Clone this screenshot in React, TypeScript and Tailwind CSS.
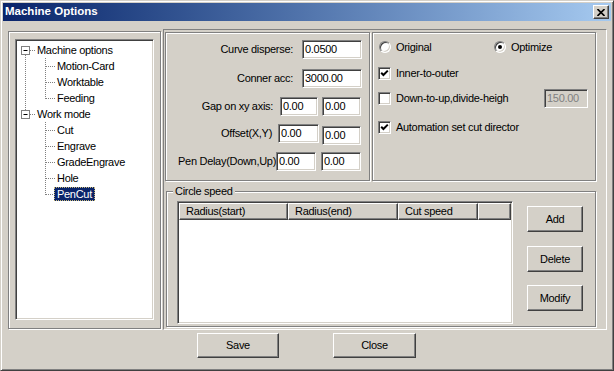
import React from "react";

const raised =
  "border border-t-white border-l-white border-r-[#404040] border-b-[#404040] shadow-[inset_-1px_-1px_0_#808080]";
const sunken =
  "border border-t-[#808080] border-l-[#808080] border-r-white border-b-white shadow-[inset_1px_1px_0_#404040,inset_-1px_-1px_0_#d4d0c8]";
const etched = "border border-[#808080] shadow-[inset_1px_1px_0_#fff,1px_1px_0_#fff]";

const tree = [
  { label: "Machine options", root: true },
  { label: "Motion-Card" },
  { label: "Worktable" },
  { label: "Feeding" },
  { label: "Work mode", root: true },
  { label: "Cut" },
  { label: "Engrave" },
  { label: "GradeEngrave" },
  { label: "Hole" },
  { label: "PenCut", selected: true },
];

const Field = ({ value, className = "", disabled = false }: { value: string; className?: string; disabled?: boolean }) => (
  <div
    className={`h-[19px] ${sunken} ${disabled ? "bg-[#d4d0c8] text-[#808080]" : "bg-white text-black"} flex items-center pl-[2px] ${className}`}
  >
    {value}
  </div>
);

const Check = ({ checked }: { checked: boolean }) => (
  <div className={`w-[13px] h-[13px] shrink-0 bg-white ${sunken} flex items-center justify-center`}>
    {checked && (
      <svg width="9" height="9" viewBox="0 0 9 9">
        <path d="M1.2 3.8 L3.4 6 L7.8 1.6" stroke="#000" strokeWidth="2" fill="none" />
      </svg>
    )}
  </div>
);

const Radio = ({ checked }: { checked: boolean }) => (
  <div className="w-[13px] h-[13px] shrink-0 flex items-center justify-center">
    <div className="w-[12px] h-[12px] rounded-full bg-white border border-t-[#808080] border-l-[#808080] border-r-white border-b-white shadow-[inset_1px_1px_0_#404040,inset_-1px_-1px_0_#d4d0c8] flex items-center justify-center">
      {checked && <div className="w-[4px] h-[4px] rounded-full bg-black" />}
    </div>
  </div>
);

const Button = ({ label, className = "" }: { label: string; className?: string }) => (
  <div className={`${raised} bg-[#d4d0c8] flex items-center justify-center ${className}`}>{label}</div>
);

export default function App() {
  return (
    <div className="w-[614px] h-[371px] bg-[#d4d0c8] font-['Liberation_Sans',Arial,sans-serif] text-[11px] tracking-[-0.3px] text-black border border-t-[#d4d0c8] border-l-[#d4d0c8] border-r-[#404040] border-b-[#404040] shadow-[inset_1px_1px_0_#fff,inset_-1px_-1px_0_#808080] p-[2px] overflow-hidden select-none">
      {/* title bar */}
      <div className="h-[18px] bg-linear-to-r from-[#0a246a] to-[#a6caf0] flex items-center pl-[2px] pr-[2px]">
        <span className="text-white font-bold text-[11.5px] tracking-[0px]">Machine Options</span>
        <div className={`ml-auto w-[16px] h-[14px] bg-[#d4d0c8] ${raised} flex items-center justify-center`}>
          <svg width="8" height="7" viewBox="0 0 8 7">
            <path d="M0.5 0 L7.5 7 M7.5 0 L0.5 7" stroke="#000" strokeWidth="1.6" />
          </svg>
        </div>
      </div>

      <div className="flex pt-[8px] pl-[5px]">
        {/* tree group */}
        <div className={`mt-[2px] w-[153px] h-[298px] ${etched} pt-[7px] pl-[6px] pr-[6px]`}>
          <div className={`h-[281px] bg-white ${sunken} p-[1px]`}>
            <div className="relative pt-[1px]">
              <svg className="absolute left-0 top-[1px]" width="120" height="170">
                <g stroke="#808080" strokeDasharray="1 1" fill="none">
                  <line x1="8.5" y1="13" x2="8.5" y2="68" />
                  <line x1="13" y1="8.5" x2="19" y2="8.5" />
                  <line x1="13" y1="72.5" x2="19" y2="72.5" />
                  <line x1="28.5" y1="16" x2="28.5" y2="57" />
                  <line x1="28.5" y1="80" x2="28.5" y2="153" />
                  {[1, 2, 3, 5, 6, 7, 8, 9].map((i) => (
                    <line key={i} x1="29" y1={i * 16 + 8.5} x2="38" y2={i * 16 + 8.5} />
                  ))}
                </g>
                {[0, 4].map((i) => (
                  <g key={i}>
                    <rect x="4.5" y={i * 16 + 4.5} width="8" height="8" fill="#fff" stroke="#808080" />
                    <line x1="6.5" y1={i * 16 + 8.5} x2="10.5" y2={i * 16 + 8.5} stroke="#000" />
                  </g>
                ))}
              </svg>
              {tree.map((t) => (
                <div key={t.label} className={`relative h-[16px] flex items-center ${t.root ? "pl-[17px]" : "pl-[37px]"}`}>
                  <span
                    className={`h-[14px] leading-[15px] px-[3px] ${
                      t.selected ? "bg-[#0a246a] text-white outline outline-1 outline-dotted outline-[#c8b878] -outline-offset-1" : ""
                    }`}
                  >
                    {t.label}
                  </span>
                </div>
              ))}
            </div>
          </div>
        </div>

        {/* right frame */}
        <div className="ml-[2px] w-[444px] h-[301px] border border-t-[#808080] border-l-[#808080] border-r-white border-b-white pt-[2px] pl-[1px]">
          <div className="flex gap-[2px]">
            {/* parameters */}
            <div className={`w-[205px] h-[149px] ${etched} pt-[7px] pr-[7px]`}>
              <div className="h-[19px] flex items-center justify-end">
                <span>Curve disperse:</span>
                <Field value="0.0500" className="ml-[9px] w-[60px]" />
              </div>
              <div className="mt-[10px] h-[19px] flex items-center justify-end">
                <span>Conner acc:</span>
                <Field value="3000.00" className="ml-[9px] w-[60px]" />
              </div>
              <div className="mt-[9px] h-[19px] flex items-center justify-end pr-[1px]">
                <span>Gap on xy axis:</span>
                <Field value="0.00" className="ml-[7px] w-[38px]" />
                <Field value="0.00" className="ml-[4px] w-[39px]" />
              </div>
              <div className="mt-[8px] h-[19px] flex items-start justify-end pr-[1px]">
                <span className="self-center">Offset(X,Y)</span>
                <Field value="0.00" className="ml-[6px] w-[41px]" />
                <Field value="0.00" className="ml-[3px] w-[39px] mt-[2px]" />
              </div>
              <div className="mt-[9px] h-[19px] flex items-center justify-end pr-[1px]">
                <span>Pen Delay(Down,Up)</span>
                <Field value="0.00" className="w-[40px]" />
                <Field value="0.00" className="ml-[5px] w-[40px]" />
              </div>
            </div>

            {/* options */}
            <div className={`w-[224px] h-[149px] ${etched} pt-[6px] pl-[5px]`}>
              <div className="h-[16px] flex items-center">
                <div className="w-[115px] flex items-center">
                  <Radio checked={false} />
                  <span className="ml-[5px]">Original</span>
                </div>
                <Radio checked />
                <span className="ml-[5px]">Optimize</span>
              </div>
              <div className="mt-[10px] h-[16px] flex items-center">
                <Check checked />
                <span className="ml-[5px]">Inner-to-outer</span>
              </div>
              <div className="mt-[8px] h-[19px] flex items-center">
                <Check checked={false} />
                <span className="ml-[5px]">Down-to-up,divide-heigh</span>
                <Field value="150.00" disabled className="ml-auto mr-[7px] w-[44px]" />
              </div>
              <div className="mt-[11px] h-[16px] flex items-center">
                <Check checked />
                <span className="ml-[5px]">Automation set cut director</span>
              </div>
            </div>
          </div>

          {/* circle speed */}
          <div className={`mt-[10px] ml-[1px] w-[430px] h-[136px] ${etched} pl-[10px]`}>
            <div className="-mt-[8px] -ml-[4px] w-fit px-[2px] bg-[#d4d0c8] h-[14px] leading-[14px]">Circle speed</div>
            <div className="flex mt-[3px]">
              <div className={`w-[336px] h-[123px] bg-white ${sunken} p-[1px]`}>
                <div className="flex h-[17px] bg-[#d4d0c8]">
                  {[
                    ["Radius(start)", "w-[109px]"],
                    ["Radius(end)", "w-[110px]"],
                    ["Cut speed", "w-[80px]"],
                    ["", "flex-1"],
                  ].map(([h, w], i) => (
                    <div key={i} className={`${w} ${raised} flex items-center pl-[6px]`}>
                      {h}
                    </div>
                  ))}
                </div>
              </div>
              <div className="ml-[14px] mt-[5px] flex flex-col">
                <Button label="Add" className="w-[56px] h-[26px]" />
                <Button label="Delete" className="mt-[14px] w-[56px] h-[26px]" />
                <Button label="Modify" className="mt-[13px] w-[56px] h-[26px]" />
              </div>
            </div>
          </div>
        </div>
      </div>

      {/* bottom buttons */}
      <div className="flex mt-[3px] pl-[194px]">
        <Button label="Save" className="w-[82px] h-[25px]" />
        <Button label="Close" className="ml-[54px] w-[83px] h-[25px]" />
      </div>
    </div>
  );
}
